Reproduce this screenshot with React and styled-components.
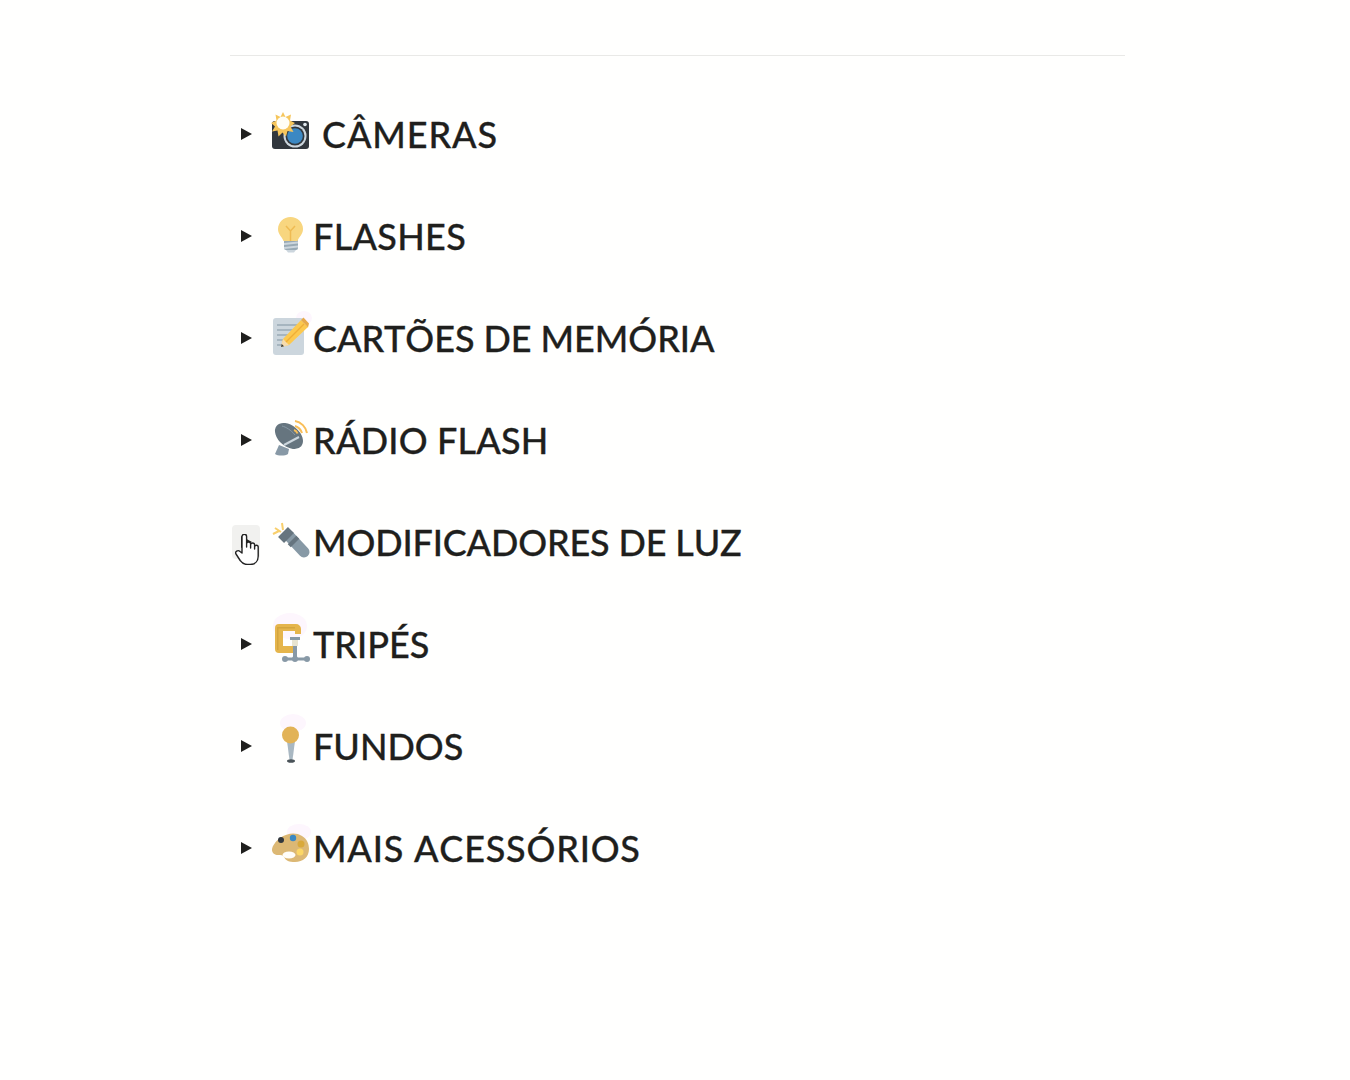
import React from "react";
import styled, { createGlobalStyle } from "styled-components";

const Global = createGlobalStyle`
	html, body {
		margin: 0;
		background: #fffffe;
	}
`;

const Page = styled.div`
	width: 895px;
	height: 1080px;
	margin-left: 230px;
	padding-top: 55px;
	box-sizing: border-box;
	font-family: Lato, "Liberation Sans", sans-serif;
`;

const Divider = styled.div`
	height: 1px;
	background: #e9e9e7;
`;

const List = styled.ul`
	list-style: none;
	margin: 0;
	padding: 27px 0 0;
`;

const Row = styled.li`
	display: flex;
	align-items: center;
	height: 102px;
`;

const Toggle = styled.span`
	position: relative;
	flex: none;
	width: 28px;
	height: 34px;
	margin-left: 2px;
	margin-right: 11px;
	display: flex;
	align-items: center;
	justify-content: center;
	border-radius: 4px;
	background: ${(props) => (props.$hover ? "#f1f1ef" : "transparent")};
`;

const Arrow = styled.svg`
	width: 11px;
	height: 12px;
`;

const Hand = styled.svg`
	position: absolute;
	left: 3px;
	top: 9px;
	width: 24px;
	height: 31px;
`;

const Emoji = styled.svg`
	flex: none;
	width: 38px;
	height: 38px;
	margin-top: -4px;
	overflow: visible;
`;

const Title = styled.span`
	margin-left: ${(props) => (props.$wide ? "13px" : "4px")};
	font-size: 36px;
	font-weight: 500;
	font-kerning: none;
	letter-spacing: ${(props) => props.$spacing || 0}px;
	color: #1f1f1d;
	-webkit-text-stroke: 0.3px #1f1f1d;
	white-space: nowrap;
`;

const Blob = ({ cx, cy, rx = 10, ry = 10 }) => (
	<ellipse cx={cx} cy={cy} rx={rx} ry={ry} fill="#fdf6fd" />
);

const Camera = () => (
	<Emoji viewBox="0 0 38 38">
		<rect x="1" y="8" width="37" height="28" rx="3" fill="#31373d" />
		<circle cx="34" cy="11.500" r="1.800" fill="#e1e8ed" />
		<circle cx="24" cy="23" r="11.500" fill="#ccd6dd" />
		<circle cx="24" cy="23" r="9.500" fill="#31373d" />
		<circle cx="24" cy="23" r="7.800" fill="#3b88c3" />
		<path
			d="M12 -1l2.500 5 5.500-2.500-1 6 5 2.500-4.500 3.500 3 5.500-6-1-1.500 5.500-3.500-4-4 4-1-6-5.500 1 3-5-4-3.500 5.500-2.500-1-6 5 2.500z"
			fill="#f6c65c"
		/>
		<circle cx="12" cy="10" r="6.500" fill="#fffef6" />
	</Emoji>
);

const Bulb = () => (
	<Emoji viewBox="0 0 38 38">
		<rect x="13" y="24" width="14" height="11" rx="2" fill="#99aab5" />
		<path d="M15 35h10l-2 2.500h-6z" fill="#ccd6dd" />
		<path d="M13 28l14-1.500v2l-14 1.500zM13 32l14-1.500v2l-14 1.500z" fill="#ccd6dd" />
		<path
			d="M19.500 2C12.500 2 7 7.500 7 14c0 5.500 4 7.500 5.500 12h14c1.500-4.500 5.500-6.500 5.500-12C32 7.500 26.500 2 19.500 2z"
			fill="#f8d67f"
		/>
		<path d="M19.500 26V15M15 11l4.500 5 4.500-5" fill="none" stroke="#efbb52" strokeWidth="1.500" />
	</Emoji>
);

const Memo = () => (
	<Emoji viewBox="0 0 38 38">
		<Blob cx="33" cy="1" rx="8" ry="7" />
		<rect x="2" y="1" width="31" height="37" rx="3" fill="#ccd6dd" />
		<path
			d="M6 8h20M6 13h18M6 18h14M6 23h9M6 28h6"
			stroke="#99aab5"
			strokeWidth="1.300"
		/>
		<path d="M30 3l7 7-19 18-8 2 2-8z" fill="#fcc94f" />
		<path d="M30 3l2.500-2.500 5.500 6-1 4z" fill="#e7a94a" />
		<path d="M12 22l-2 8 8-2z" fill="#f6dcae" />
		<path d="M10.700 27l-.7 3 3-.8z" fill="#31373d" />
		<path d="M15 25L33 7" stroke="#f0ad36" strokeWidth="1.200" />
	</Emoji>
);

const Satellite = () => (
	<Emoji viewBox="0 0 38 38">
		<path d="M8 26l10 4-1 5c-3 2-10 2-13 0z" fill="#8899a6" />
		<ellipse cx="18" cy="17" rx="16" ry="10.500" fill="#66757f" transform="rotate(40 18 17)" />
		<path d="M11 7c4 1 9 4 13 9" fill="none" stroke="#8899a6" strokeWidth="1" />
		<path d="M13 26l15-8" stroke="#ccd6dd" strokeWidth="2" />
		<path
			d="M24 2c6 1 11 6 12 12M24 7c3 1 6 4 7 7M23 11c2 .5 3 2 3.500 3.500"
			fill="none"
			stroke="#f9be57"
			strokeWidth="2"
		/>
	</Emoji>
);

const Flashlight = () => (
	<Emoji viewBox="0 0 38 38">
		<path
			d="M2 13l6-3M4 7l6 4M11 2l1 7"
			fill="none"
			stroke="#f8cf6c"
			strokeWidth="2"
		/>
		<path d="M18 15L33 31" stroke="#8799a5" strokeWidth="11" strokeLinecap="round" />
		<path d="M12 11l6 6" stroke="#66757f" strokeWidth="14" />
		<path d="M21 19l3 3" stroke="#66757f" strokeWidth="12" />
	</Emoji>
);

const Clamp = () => (
	<Emoji viewBox="0 0 38 38">
		<Blob cx="19" cy="3" rx="17" ry="13" />
		<path
			d="M4 5a4 4 0 0 1 4-4h17a5 5 0 0 1 5 5v5h-6V8H12v15h13v7H8a4 4 0 0 1-4-4z"
			fill="#e5b54c"
		/>
		<path d="M6 4h18v1.500H7.500V27H6z" fill="#d4a53e" />
		<rect x="19" y="14" width="10" height="3" fill="#8899a6" />
		<rect x="21" y="17" width="6" height="6" fill="#e8e4d0" />
		<rect x="22" y="23" width="4" height="12" fill="#8899a6" />
		<rect x="14" y="34.500" width="22" height="3" fill="#8899a6" />
		<circle cx="14" cy="36" r="3" fill="#8899a6" />
		<circle cx="36" cy="36" r="3" fill="#8899a6" />
		<circle cx="24" cy="36" r="3" fill="#8899a6" />
	</Emoji>
);

const Pin = () => (
	<Emoji viewBox="0 0 38 38">
		<Blob cx="22" cy="-2" rx="13" ry="9" />
		<path d="M16 16h8l-2.500 19h-3z" fill="#a9b8c2" />
		<ellipse cx="20" cy="36" rx="4" ry="1.800" fill="#4a5358" />
		<circle cx="19.500" cy="10" r="8.500" fill="#e2b357" />
	</Emoji>
);

const Palette = () => (
	<Emoji viewBox="0 0 38 38">
		<Blob cx="28" cy="5" rx="12" ry="8" />
		<path
			d="M1 23c0-4 4-9 8-12 7-5 16-6 22-2 5 3 7 8 7 13 0 8-6 13-14 13-6 0-9-1-11-5-1-2-3-2-6-2-3 0-6-2-6-5z"
			fill="#dcb874"
		/>
		<ellipse cx="18" cy="28" rx="6.500" ry="3.500" fill="#fffdf8" />
		<circle cx="10" cy="13" r="3" fill="#31373d" />
		<circle cx="22" cy="11" r="3.200" fill="#3b88c3" />
		<circle cx="30" cy="17" r="3.500" fill="#d9a93b" />
		<circle cx="29" cy="25" r="3.500" fill="#fcd766" />
	</Emoji>
);

const categories = [
	{ name: "CÂMERAS", icon: Camera, wide: true, spacing: 0.9 },
	{ name: "FLASHES", icon: Bulb, spacing: 0.3 },
	{ name: "CARTÕES DE MEMÓRIA", icon: Memo, spacing: -0.05 },
	{ name: "RÁDIO FLASH", icon: Satellite, spacing: 0.2 },
	{ name: "MODIFICADORES DE LUZ", icon: Flashlight, hover: true, spacing: -0.15 },
	{ name: "TRIPÉS", icon: Clamp },
	{ name: "FUNDOS", icon: Pin },
	{ name: "MAIS ACESSÓRIOS", icon: Palette, spacing: 0.8 },
];

function App() {
	return (
		<Page>
			<Global />
			<Divider />
			<List>
				{categories.map((cat) => {
					const Icon = cat.icon;
					return (
						<Row key={cat.name}>
							<Toggle $hover={cat.hover}>
								<Arrow viewBox="0 0 11 12">
									<path d="M0 0l11 6-11 6z" fill="#1f1f1d" />
								</Arrow>
								{cat.hover && (
									<Hand viewBox="0 0 24 31">
										<path
											d="M7 19V2.500a2.300 2.300 0 0 1 4.600 0V13v-3a2 2 0 0 1 4 0v4-3a2 2 0 0 1 4 0v4-2a1.800 1.800 0 0 1 3.600 0v9c0 5-3 8.500-8 8.500h-3c-3.500 0-5-1.500-7-4l-4.200-6.500c-1.500-2.500 2-4.500 4-2.500z"
											fill="#fff"
											stroke="#222"
											strokeWidth="1.400"
											strokeLinejoin="round"
										/>
									</Hand>
								)}
							</Toggle>
							<Icon />
							<Title $wide={cat.wide} $spacing={cat.spacing}>
								{cat.name}
							</Title>
						</Row>
					);
				})}
			</List>
		</Page>
	);
}

export default App;
